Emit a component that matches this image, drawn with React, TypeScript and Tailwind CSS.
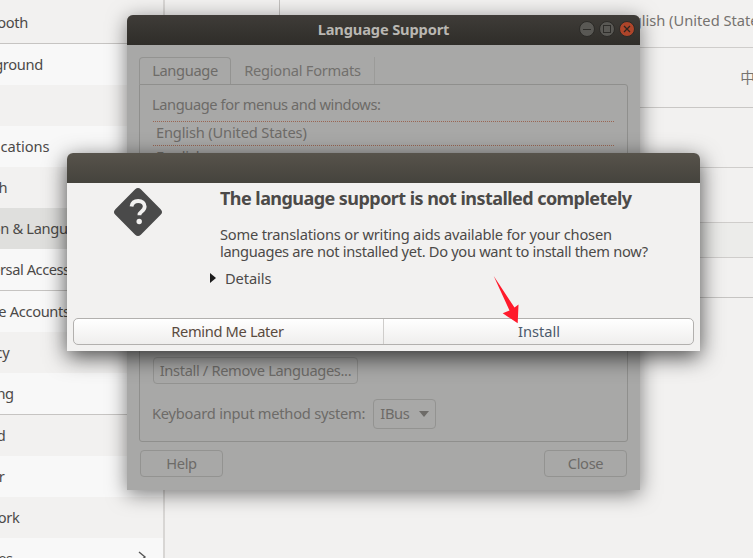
const font = { fontFamily: '"Noto Sans", sans-serif' };

const rows: { label: string; h: string; bg: string; sep?: boolean; track?: string; shift?: string }[] = [
  { label: "Bluetooth", h: "h-[44px]", bg: "bg-[#f2f1f0]", sep: true, shift: "mt-0" },
  { label: "Background", h: "h-[41px]", bg: "bg-[#f8f8f8]" },
  { label: "Dock", h: "h-[41px]", bg: "bg-[#f2f1f0]" },
  { label: "Notifications", h: "h-[41px]", bg: "bg-[#f8f8f8]", track: "tracking-[-0.05px]" },
  { label: "Search", h: "h-[41px]", bg: "bg-[#f2f1f0]" },
  { label: "Region & Language", h: "h-[41px]", bg: "bg-[#dfdfdd]" },
  { label: "Universal Access", h: "h-[42px]", bg: "bg-[#f8f8f8]", sep: true, track: "tracking-[-0.45px]" },
  { label: "Online Accounts", h: "h-[41px]", bg: "bg-[#f8f8f8]" },
  { label: "Privacy", h: "h-[41px]", bg: "bg-[#f2f1f0]" },
  { label: "Sharing", h: "h-[42px]", bg: "bg-[#f8f8f8]", sep: true },
  { label: "Sound", h: "h-[41px]", bg: "bg-[#f2f1f0]" },
  { label: "Power", h: "h-[41px]", bg: "bg-[#f8f8f8]" },
  { label: "Network", h: "h-[41px]", bg: "bg-[#f2f1f0]" },
  { label: "Devices", h: "h-[41px]", bg: "bg-[#f8f8f8]" },
];

function Sidebar() {
  return (
    <div className="w-[165px] shrink-0 border-r-2 border-[#d8d6d4] overflow-hidden flex flex-col">
      {rows.map((r) => (
        <div
          key={r.label}
          className={`${r.h} ${r.bg} ${r.sep ? "border-b border-[#c6c4c2]" : ""} shrink-0 flex items-center relative`}
        >
          <span className={`ml-[-37px] ${r.shift ?? "mt-[-2px]"} whitespace-nowrap text-[14.67px] ${r.track ?? "tracking-[-0.35px]"} text-[#4c4a48]`}>{r.label}</span>
          {r.label === "Devices" && (
            <svg className="absolute right-[16px] top-[12px]" width="10" height="14" viewBox="0 0 10 14">
              <path d="M2 2l6 5-6 5" fill="none" stroke="#555" strokeWidth="1.4" />
            </svg>
          )}
        </div>
      ))}
    </div>
  );
}

function RightPane() {
  return (
    <div className="flex-1 min-w-0 flex flex-col text-[14.67px] text-[#76736f]">
      <div className="h-[48px] shrink-0 border-b border-[#cfcdcb] flex overflow-hidden">
        <div className="w-[115px] shrink-0 h-[15px] border-r border-[#c2c0be]" />
        <div className="flex-1 min-w-0 flex items-center justify-end pb-[7px]">
          <span className="whitespace-nowrap mr-[-17px]">English (United States)</span>
        </div>
      </div>
      <div className="h-[60px] shrink-0 border-b border-[#c9c7c5] flex items-center justify-end overflow-hidden">
        <span className="whitespace-nowrap mr-[-2px] pb-[2px]" style={{ fontFamily: '"Noto Sans CJK SC", sans-serif' }}>中</span>
      </div>
      <div className="h-[60px] shrink-0 border-b border-[#cfcdcb]" />
      <div className="h-[54px] shrink-0" />
      <div className="h-[36px] shrink-0 bg-[#ececea] border-y border-[#cfcdcb]" />
      <div className="h-[40px] shrink-0 border-b border-[#c6c4c2]" />
    </div>
  );
}

function DimButton({ label, className }: { label: string; className: string }) {
  return (
    <div className={`${className} h-[27px] rounded-[4px] border border-[#939391] flex items-center justify-center pb-[2px] text-[#6d6b68]`}>
      {label}
    </div>
  );
}

function LanguageWindow() {
  return (
    <div className="absolute left-[127px] top-[15px] w-[513px] h-[475px] rounded-t-[6px] bg-[#a8a8a7] flex flex-col shadow-[0_4px_20px_rgba(0,0,0,0.5)] text-[14.67px] tracking-[-0.35px] text-[#6d6b68]">
      <div className="h-[30px] shrink-0 rounded-t-[6px] bg-gradient-to-b from-[#3f3c38] to-[#2f2d29] flex items-center justify-center relative pb-[3px]">
        <span className="font-bold text-[14.67px] tracking-[-0.15px] text-[#b9b7b2]">Language Support</span>
        <div className="absolute right-[5px] top-[6px] flex gap-[4px]">
          <div className="w-[16px] h-[16px] rounded-full bg-[#595854] border border-[#2b2a27] flex items-center justify-center">
            <div className="w-[8px] h-px bg-[#2e2d2a]" />
          </div>
          <div className="w-[16px] h-[16px] rounded-full bg-[#595854] border border-[#2b2a27] flex items-center justify-center">
            <div className="w-[8px] h-[8px] border border-[#2e2d2a]" />
          </div>
          <div className="w-[16px] h-[16px] rounded-full bg-[#ae452a] border border-[#2b2a27] flex items-center justify-center">
            <svg width="8" height="8" viewBox="0 0 8 8"><path d="M1 1l6 6M7 1L1 7" stroke="#2e2620" strokeWidth="1.3" /></svg>
          </div>
        </div>
      </div>
      <div className="flex-1 flex flex-col px-[12px] pt-[12px]">
        <div className="flex h-[27px] shrink-0">
          <div className="w-[92px] rounded-t-[4px] border border-b-0 border-[#939391] flex items-center justify-center pb-[2px]">Language</div>
          <div className="w-[144px] border-r border-[#9b9b99] flex items-center justify-center pb-[2px] tracking-[-0.25px] text-[#72706d]">Regional Formats</div>
        </div>
        <div className="h-[358px] shrink-0 rounded-b-[3px] rounded-tr-[3px] border border-[#8f8f8d] flex flex-col pl-[12px] pr-[13px] pt-[10px]">
          <div className="h-[20px] leading-[20px] whitespace-nowrap tracking-[-0.42px] mt-[-1px]">Language for menus and windows:</div>
          <div className="mt-[7px] ml-[1px] border-y border-dotted border-[#9a6552] h-[25px] pl-[3px] leading-[21px] tracking-[-0.17px]">English (United States)</div>
          <div className="ml-[1px] pl-[3px] h-[25px] leading-[21px] tracking-[-0.17px]">English</div>
          <div className="h-[186px]" />
          <DimButton label="Install / Remove Languages..." className="w-[205px] ml-[1px] h-[26px]" />
          <div className="mt-[15px] flex items-center gap-[8px]">
            <span className="whitespace-nowrap tracking-[-0.23px] pb-[2px]">Keyboard input method system:</span>
            <div className="w-[63px] h-[30px] rounded-[4px] border border-[#939391] flex items-center pl-[6px] gap-[10px]">
              <span className="pb-[2px]">IBus</span>
              <svg width="10" height="6" viewBox="0 0 10 6"><path d="M0 0h10L5 6z" fill="#6d6b68" /></svg>
            </div>
          </div>
        </div>
        <div className="flex justify-between mt-[8px] pl-[1px] pr-[1px]">
          <DimButton label="Help" className="w-[83px]" />
          <DimButton label="Close" className="w-[83px]" />
        </div>
      </div>
    </div>
  );
}

function QuestionIcon() {
  return (
    <svg width="50" height="50" viewBox="0 0 50 50" className="shrink-0">
      <rect x="7" y="7" width="36" height="36" rx="4" transform="rotate(45 25 25)" fill="#4a4a4a" />
      <path d="M18.500 19.500c.6-3.600 3.300-5.500 6.700-5.500 3.800 0 6.500 2.300 6.500 5.600 0 2.600-1.500 3.900-3.300 5.200-1.400 1-2 1.700-2 3.500" fill="none" stroke="#f2f1f0" strokeWidth="3.800" />
      <circle cx="26.200" cy="34.500" r="2.700" fill="#f2f1f0" />
    </svg>
  );
}

function Dialog() {
  return (
    <div className="absolute left-[67px] top-[153px] w-[633px] h-[198px] rounded-t-[6px] bg-[#f2f1f0] flex flex-col shadow-[0_6px_22px_rgba(0,0,0,0.7)] text-[14.67px] tracking-[-0.35px] text-[#4c4a48]">
      <div className="h-[30px] shrink-0 rounded-t-[6px] bg-gradient-to-b from-[#57534b] to-[#45433d]" />
      <div className="flex-1 flex pl-[46px]">
        <div className="pt-[4px]"><QuestionIcon /></div>
        <div className="ml-[57px] flex flex-col">
          <div className="font-bold text-[18px] h-[30px] leading-[30px] tracking-[-0.55px] whitespace-nowrap">The language support is not installed completely</div>
          <div className="mt-[13px] leading-[17px] whitespace-nowrap">
            <div className="tracking-[-0.2px]">Some translations or writing aids available for your chosen</div>
            <div className="tracking-[-0.32px]">languages are not installed yet. Do you want to install them now?</div>
          </div>
          <div className="mt-[8px] h-[20px] flex items-center leading-[20px] ml-[-10px]">
            <svg width="6" height="10" viewBox="0 0 6 10"><path d="M0 0l6 5-6 5z" fill="#1c1c1c" /></svg>
            <span className="ml-[9px] tracking-[-0.1px]">Details</span>
          </div>
        </div>
      </div>
      <div className="mx-[6px] mb-[6px] h-[27px] shrink-0 flex rounded-[5px] border border-[#b2b0ae] bg-gradient-to-b from-[#ffffff] to-[#efeeed]">
        <div className="w-[310px] border-r border-[#cfcdcb] flex items-center justify-center pb-[2px] pr-[2px] text-[#5a4a3e]">Remind Me Later</div>
        <div className="flex-1 flex items-center justify-center pb-[2px] pl-[1px] tracking-[-0.05px] text-[#4c5a6c]">Install</div>
      </div>
    </div>
  );
}

export default function App() {
  return (
    <div className="relative w-[753px] h-[558px] overflow-hidden bg-[#f2f1f0] flex" style={font}>
      <Sidebar />
      <RightPane />
      <LanguageWindow />
      <Dialog />
      <svg className="absolute left-[485px] top-[270px]" width="40" height="60" viewBox="485 270 40 60">
        <polygon points="493.700,276 514.500,307.500 518.500,304.500 517.700,323.300 502.700,313.300 509.500,310.500" fill="#ff1a2b" />
      </svg>
    </div>
  );
}
